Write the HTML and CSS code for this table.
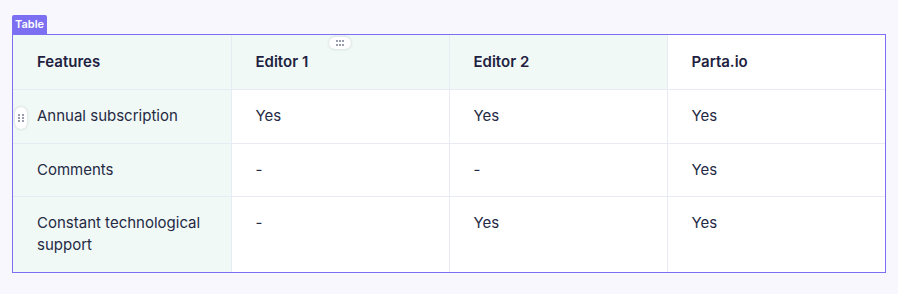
FILE: index.html
```html
<!DOCTYPE html>
<html>
<head>
<meta charset="utf-8">
<link rel="stylesheet" href="styles.css">
</head>
<body>
<div class="page">
  <div class="block">
    <div class="label">Table</div>
    <div class="frame">
      <table class="grid">
        <tr class="head">
          <th>Features</th>
          <th>Editor 1</th>
          <th>Editor 2</th>
          <th class="plain">Parta.io</th>
        </tr>
        <tr>
          <td class="first">Annual subscription</td>
          <td>Yes</td>
          <td>Yes</td>
          <td>Yes</td>
        </tr>
        <tr>
          <td class="first">Comments</td>
          <td>-</td>
          <td>-</td>
          <td>Yes</td>
        </tr>
        <tr>
          <td class="first">Constant technological<br>support</td>
          <td>-</td>
          <td>Yes</td>
          <td>Yes</td>
        </tr>
      </table>
      <div class="handle col-handle"><span></span><span></span><span></span><span></span><span></span><span></span></div>
      <div class="handle row-handle"><span></span><span></span><span></span><span></span><span></span><span></span></div>
    </div>
  </div>
</div>
</body>
</html>
```
FILE: styles.css
```css
html, body {
  margin: 0;
  padding: 0;
  background: #f8f7fd;
  font-family: Inter, "Noto Sans", sans-serif;
}
.page {
  padding: 15px 12px 0 12px;
  width: 874px;
}
.block {
  display: flex;
  flex-direction: column;
  align-items: flex-start;
}
.label {
  background: #7c6ff1;
  color: #fff;
  font-size: 11px;
  font-weight: 600;
  line-height: 19px;
  height: 19px;
  padding: 0 3px;
  border-radius: 2px 2px 0 0;
}
.frame {
  position: relative;
  width: 872px;
  border: 1px solid #7c70f2;
  background: #fff;
}
.grid {
  width: 100%;
  border-collapse: collapse;
  table-layout: fixed;
  color: #252a44;
  font-size: 15px;
}
.grid th, .grid td {
  text-align: left;
  vertical-align: middle;
  padding: 15.25px 24px;
  height: 22px;
  line-height: 22px;
  border-right: 1px solid #e9ebf3;
  border-bottom: 1px solid #e9ebf3;
}
.grid th:last-child, .grid td:last-child {
  border-right: none;
}
.grid th {
  font-weight: 600;
  color: #1e2240;
  background: #f1f9f6;
  padding: 16px 24px;
}
.grid th.plain {
  background: #fff;
}
.grid td.first {
  background: #f1f9f6;
}
.grid tr:last-child td {
  border-bottom: none;
  vertical-align: top;
  padding-top: 15px;
  padding-bottom: 16px;
}
.handle {
  position: absolute;
  background: #fff;
  box-shadow: 0 0 3px rgba(60, 60, 90, 0.22);
  display: grid;
  gap: 1.5px;
  justify-content: center;
  align-content: center;
}
.handle span {
  width: 1.8px;
  height: 1.8px;
  background: #7d8196;
  border-radius: 50%;
}
.col-handle {
  left: 316px;
  top: 2px;
  width: 22px;
  height: 12px;
  border-radius: 6px;
  grid-template-columns: repeat(3, 1.8px);
}
.row-handle {
  left: 2px;
  top: 72px;
  width: 12px;
  height: 22px;
  border-radius: 6px;
  grid-template-columns: repeat(2, 1.8px);
}
```
